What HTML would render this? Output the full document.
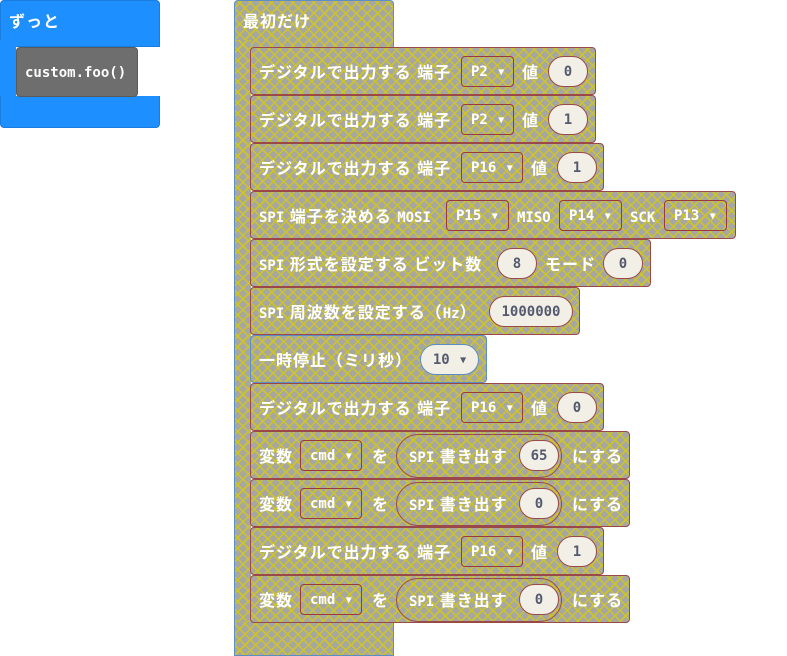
<!DOCTYPE html>
<html><head><meta charset="utf-8"><style>
html,body{margin:0;padding:0;background:#fff;width:787px;height:656px;overflow:hidden;position:relative}
*{box-sizing:border-box}
.a{position:absolute}
.pat{background:
repeating-linear-gradient(45deg,transparent 0 6px,#cdc42a 6px 7.5px),
repeating-linear-gradient(-45deg,transparent 0 6px,#cdc42a 6px 7.5px),#a6a6a2;}
.row{position:absolute;left:250px;height:48px;border:1px solid #9a4848;border-radius:4px;}
.t{position:absolute;color:#fff;font:bold 16px "Liberation Sans","Noto Sans CJK JP",sans-serif;white-space:nowrap;line-height:20px;letter-spacing:1px;margin-top:2px}
.m{font-family:"DejaVu Sans Mono","Liberation Mono",monospace;font-size:14px;letter-spacing:0}
.dd{position:absolute;height:31px;border:1.5px solid #9a3a3a;border-radius:4px;color:#fff;font:bold 14px "DejaVu Sans Mono","Liberation Mono",monospace;line-height:30px;padding-left:9px;white-space:nowrap}
.ar{font-size:10px;vertical-align:1px;margin-left:2px}
.ov{position:absolute;height:31px;border:1.5px solid #9a4a4a;border-radius:16px;background:#f1efe6;color:#555a6e;font:bold 14px "DejaVu Sans Mono","Liberation Mono",monospace;line-height:30px;text-align:center}
.big{position:absolute;height:44px;border:1.5px solid #9a4a4a;border-radius:22px}
</style></head><body>
<div class="a" style="left:0;top:0;width:160px;height:47px;background:#1e8fff;border-radius:4px 4px 0 0;border:1px solid #1a7de0"></div>
<div class="a" style="left:0;top:40px;width:16px;height:60px;background:#1e8fff"></div>
<div class="a" style="left:0;top:96px;width:160px;height:32px;background:#1e8fff;border-radius:0 0 4px 4px;border:1px solid #1a7de0;border-top:none"></div>
<div class="t" style="left:9px;top:11px">ずっと</div>
<div class="a" style="left:16px;top:47px;width:122px;height:50px;background:#6e6e6e;border:1px solid #5a5a5a;border-radius:4px"></div>
<div class="t m" style="left:25px;top:61px">custom.foo()</div>

<div class="a pat" style="left:234px;top:0;width:160px;height:50px;border:1px solid #5c8ec4;border-radius:4px 4px 0 0;border-bottom:none"></div>
<div class="a pat" style="left:234px;top:40px;width:17px;height:600px;border-left:1px solid #5c8ec4"></div>
<div class="a pat" style="left:234px;top:622px;width:160px;height:34px;border:1px solid #5c8ec4;border-top:none"></div>
<div class="t" style="left:243px;top:11px">最初だけ</div>

<div class="row pat" style="top:47px;width:346px"></div>
<div class="t" style="left:259px;top:62px">デジタルで出力する 端子</div>
<div class="dd" style="left:461px;top:56px;width:53px">P2 <span class="ar">▼</span></div>
<div class="t" style="left:522px;top:62px">値</div>
<div class="ov" style="left:548px;top:56px;width:40px">0</div>

<div class="row pat" style="top:95px;width:346px"></div>
<div class="t" style="left:259px;top:110px">デジタルで出力する 端子</div>
<div class="dd" style="left:461px;top:104px;width:53px">P2 <span class="ar">▼</span></div>
<div class="t" style="left:522px;top:110px">値</div>
<div class="ov" style="left:548px;top:104px;width:40px">1</div>

<div class="row pat" style="top:143px;width:354px"></div>
<div class="t" style="left:259px;top:158px">デジタルで出力する 端子</div>
<div class="dd" style="left:461px;top:152px;width:62px">P16 <span class="ar">▼</span></div>
<div class="t" style="left:531px;top:158px">値</div>
<div class="ov" style="left:557px;top:152px;width:40px">1</div>

<div class="row pat" style="top:191px;width:486px"></div>
<div class="t" style="left:259px;top:206px"><span class="m">SPI</span> 端子を決める <span class="m">MOSI</span></div>
<div class="dd" style="left:446px;top:200px;width:63px">P15 <span class="ar">▼</span></div>
<div class="t m" style="left:517px;top:206px">MISO</div>
<div class="dd" style="left:559px;top:200px;width:63px">P14 <span class="ar">▼</span></div>
<div class="t m" style="left:630px;top:206px">SCK</div>
<div class="dd" style="left:664px;top:200px;width:63px">P13 <span class="ar">▼</span></div>

<div class="row pat" style="top:239px;width:401px"></div>
<div class="t" style="left:259px;top:254px"><span class="m">SPI</span> 形式を設定する ビット数</div>
<div class="ov" style="left:497px;top:248px;width:40px">8</div>
<div class="t" style="left:545px;top:254px">モード</div>
<div class="ov" style="left:603px;top:248px;width:40px">0</div>

<div class="row pat" style="top:287px;width:330px"></div>
<div class="t" style="left:259px;top:302px"><span class="m">SPI</span> 周波数を設定する（<span class="m">Hz</span>）</div>
<div class="ov" style="left:489px;top:296px;width:84px">1000000</div>

<div class="row pat" style="top:335px;width:237px;border-color:#5c8ec4"></div>
<div class="t" style="left:259px;top:350px">一時停止（ミリ秒）</div>
<div class="ov" style="left:420px;top:344px;width:59px;border-color:#5c8ec4">10 <span class="ar">▼</span></div>

<div class="row pat" style="top:383px;width:354px"></div>
<div class="t" style="left:259px;top:398px">デジタルで出力する 端子</div>
<div class="dd" style="left:461px;top:392px;width:62px">P16 <span class="ar">▼</span></div>
<div class="t" style="left:531px;top:398px">値</div>
<div class="ov" style="left:557px;top:392px;width:40px">0</div>

<div class="row pat" style="top:431px;width:380px"></div>
<div class="t" style="left:259px;top:446px">変数</div>
<div class="dd" style="left:300px;top:440px;width:62px">cmd <span class="ar">▼</span></div>
<div class="t" style="left:372px;top:446px">を</div>
<div class="big" style="left:396px;top:434px;width:166px"></div>
<div class="t" style="left:409px;top:446px"><span class="m">SPI</span> 書き出す</div>
<div class="ov" style="left:519px;top:440px;width:40px">65</div>
<div class="t" style="left:572px;top:446px">にする</div>

<div class="row pat" style="top:479px;width:380px"></div>
<div class="t" style="left:259px;top:494px">変数</div>
<div class="dd" style="left:300px;top:488px;width:62px">cmd <span class="ar">▼</span></div>
<div class="t" style="left:372px;top:494px">を</div>
<div class="big" style="left:396px;top:482px;width:166px"></div>
<div class="t" style="left:409px;top:494px"><span class="m">SPI</span> 書き出す</div>
<div class="ov" style="left:519px;top:488px;width:40px">0</div>
<div class="t" style="left:572px;top:494px">にする</div>

<div class="row pat" style="top:527px;width:354px"></div>
<div class="t" style="left:259px;top:542px">デジタルで出力する 端子</div>
<div class="dd" style="left:461px;top:536px;width:62px">P16 <span class="ar">▼</span></div>
<div class="t" style="left:531px;top:542px">値</div>
<div class="ov" style="left:557px;top:536px;width:40px">1</div>

<div class="row pat" style="top:575px;width:380px"></div>
<div class="t" style="left:259px;top:590px">変数</div>
<div class="dd" style="left:300px;top:584px;width:62px">cmd <span class="ar">▼</span></div>
<div class="t" style="left:372px;top:590px">を</div>
<div class="big" style="left:396px;top:578px;width:166px"></div>
<div class="t" style="left:409px;top:590px"><span class="m">SPI</span> 書き出す</div>
<div class="ov" style="left:519px;top:584px;width:40px">0</div>
<div class="t" style="left:572px;top:590px">にする</div>
</body></html>
